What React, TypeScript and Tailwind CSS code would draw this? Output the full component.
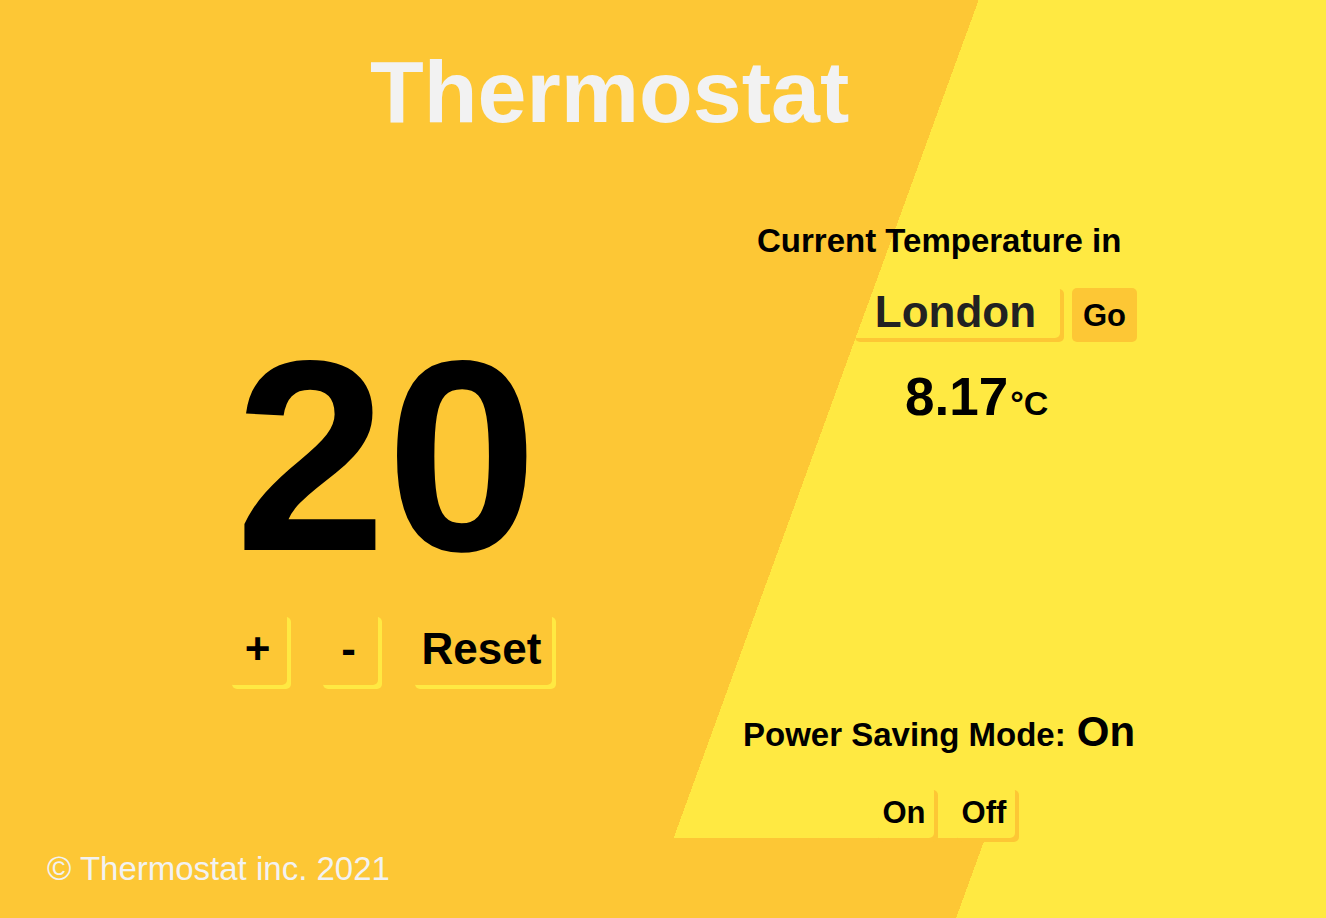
import { useState } from 'react'

const ORANGE_SHADOW = 'shadow-[4px_4px_0_#fdc735]'

export default function App() {
  const [target, setTarget] = useState(20)
  const [city, setCity] = useState('London')
  const [powerSaving, setPowerSaving] = useState(true)

  return (
    <div className="min-h-screen font-['Liberation_Sans',Arial,sans-serif] text-black">
      <main className="h-[838px] bg-[linear-gradient(110deg,#fdc735_60%,#ffe942_60%)]">
        <h1 className="pt-[48px] pl-[370px] text-[88px] leading-none font-bold text-[#f2f2f2]">
          Thermostat
        </h1>

        <div className="flex">
          {/* target temperature */}
          <section className="w-[663px] shrink-0">
            <div className="mt-[184px] pl-[235px] text-[272px] leading-none font-bold">{target}</div>
            <div className="mt-[21px] pl-[228px] flex gap-[32px]">
              <button
                onClick={() => setTarget((t) => t + 1)}
                className="w-[59px] h-[72px] rounded-[5px] shadow-[4px_4px_0_#ffe942] text-[44px] leading-none font-bold"
              >
                +
              </button>
              <button
                onClick={() => setTarget((t) => t - 1)}
                className="w-[59px] h-[72px] rounded-[5px] shadow-[4px_4px_0_#ffe942] text-[44px] leading-none font-bold"
              >
                -
              </button>
              <button
                onClick={() => setTarget(20)}
                className="ml-px w-[141px] h-[72px] rounded-[5px] shadow-[4px_4px_0_#ffe942] text-[44px] leading-none font-bold"
              >
                Reset
              </button>
            </div>
          </section>

          {/* outside temperature + power saving */}
          <section className="flex-1">
            <p className="mt-[88px] ml-[94px] text-[33px] leading-none font-bold">Current Temperature in</p>
            <div className="mt-[28px] flex items-start">
              <input
                value={city}
                onChange={(e) => setCity(e.target.value)}
                className={`ml-[188px] w-[209px] h-[53px] rounded-[5px] bg-transparent text-center text-[44px] leading-none font-bold text-[#222] outline-none ${ORANGE_SHADOW}`}
              />
              <button className="ml-[12px] mt-[3px] w-[65px] h-[54px] rounded-[5px] bg-[#fdc735] text-[31px] leading-none font-bold">
                Go
              </button>
            </div>
            <div className="mt-[28px] ml-[242px] flex items-baseline">
              <span className="text-[53px] leading-none font-bold">8.17</span>
              <span className="ml-[2px] text-[34px] leading-none font-bold">°C</span>
            </div>

            <div className="mt-[288px] ml-[80px] flex items-baseline">
              <span className="text-[33px] leading-none font-bold">Power Saving Mode:</span>
              <span className="ml-[11px] text-[42px] leading-none font-bold">{powerSaving ? 'On' : 'Off'}</span>
            </div>
            <div className="mt-[33px] ml-[211px] flex gap-[19px]">
              <button
                onClick={() => setPowerSaving(true)}
                className={`w-[60px] h-[52px] rounded-[5px] text-[31px] leading-none font-bold ${ORANGE_SHADOW}`}
              >
                On
              </button>
              <button
                onClick={() => setPowerSaving(false)}
                className={`w-[62px] h-[52px] rounded-[5px] text-[31px] leading-none font-bold ${ORANGE_SHADOW}`}
              >
                Off
              </button>
            </div>
          </section>
        </div>
      </main>

      <footer className="h-[80px] pt-[14px] pl-[47px] bg-[linear-gradient(110deg,#fdc735_72.7%,#ffe942_72.7%)] text-[33px] leading-none text-[#f2f2f2]">
        © Thermostat inc. 2021
      </footer>
    </div>
  )
}
